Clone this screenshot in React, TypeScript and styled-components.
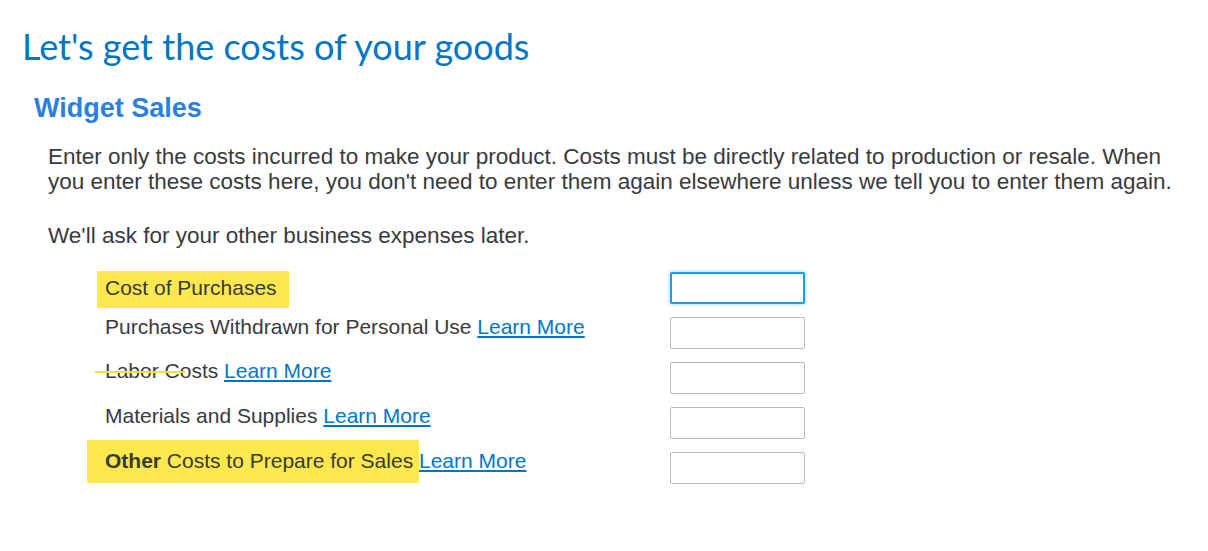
import React from "react";
import styled, { createGlobalStyle, css } from "styled-components";

const GlobalStyle = createGlobalStyle`
  html, body { margin: 0; padding: 0; background: #ffffff; }
  body { font-family: "Liberation Sans", Arial, sans-serif; color: #393a3d; }
`;

const Page = styled.main`
  padding: 24px 22px 40px 22px;
`;

const Title = styled.h1`
  margin: 0;
  font-family: Lato, "Open Sans", sans-serif;
  font-weight: 400;
  font-size: 36px;
  line-height: 44px;
  color: #0077c5;
`;

const Section = styled.section`
  padding-left: 12px;
  margin-top: 25px;
`;

const SubTitle = styled.h2`
  margin: 0;
  font-family: "Liberation Sans", Arial, sans-serif;
  font-weight: 700;
  font-size: 27px;
  line-height: 30px;
  color: #2b7fdf;
`;

const Body = styled.div`
  padding-left: 14px;
  margin-top: 21px;
`;

const Para = styled.p`
  margin: 0 0 29px 0;
  font-size: 22.5px;
  line-height: 25px;
  color: #393a3d;
  white-space: nowrap;
  &:last-child { margin-bottom: 0; }
`;

const Rows = styled.div`
  margin-top: 24px;
  padding-left: 63px;
  display: flex;
  flex-direction: column;
  gap: 13px;
`;

const Row = styled.div`
  display: grid;
  grid-template-columns: 573px 135px;
  align-items: start;
`;

const Label = styled.div<{ $top: number }>`
  margin-top: ${(p) => p.$top}px;
  padding-left: 8px;
  font-size: 21px;
  line-height: 24px;
  color: #393a3d;
  white-space: nowrap;
`;

const Mark = styled.span<{ $pad: [number, number, number, number] }>`
  display: inline-block;
  background: #fde84e;
  ${(p) => css`
    padding: ${p.$pad[0]}px ${p.$pad[1]}px ${p.$pad[2]}px ${p.$pad[3]}px;
    margin: -${p.$pad[0]}px -${p.$pad[1]}px -${p.$pad[2]}px -${p.$pad[3]}px;
  `}
`;

const Struck = styled.span`
  position: relative;
  &::before {
    content: "";
    position: absolute;
    left: -10px;
    width: 90px;
    top: 12px;
    height: 2px;
    background: #f3df3a;
  }
`;

const Bold = styled.strong`
  font-weight: 700;
`;

const Link = styled.a`
  color: #0077c5;
  text-decoration: underline;
  text-underline-offset: 2px;
  cursor: pointer;
`;

const Field = styled.input<{ $focused?: boolean }>`
  box-sizing: border-box;
  width: 135px;
  height: 32px;
  margin: 0;
  padding: 4px 8px;
  border: 1px solid #b9b9b9;
  border-radius: 2px;
  font-family: "Liberation Sans", Arial, sans-serif;
  font-size: 16px;
  background: #fff;
  outline: none;
  ${(p) =>
    p.$focused &&
    css`
      border: 2px solid #1a9ff0;
      box-shadow: 0 0 3px 1px rgba(40, 160, 240, 0.35);
    `}
`;

export default function App() {
  return (
    <>
      <GlobalStyle />
      <Page>
        <Title>Let's get the costs of your goods</Title>
        <Section>
          <SubTitle>Widget Sales</SubTitle>
          <Body>
            <Para>
              Enter only the costs incurred to make your product. Costs must be directly related to production or resale. When
              <br />
              you enter these costs here, you don't need to enter them again elsewhere unless we tell you to enter them again.
            </Para>
            <Para>We'll ask for your other business expenses later.</Para>
          </Body>
          <Rows>
            <Row>
              <Label $top={4}>
                <Mark $pad={[5, 12, 8, 8]}>Cost of Purchases</Mark>
              </Label>
              <Field $focused aria-label="Cost of Purchases" />
            </Row>
            <Row>
              <Label $top={-2}>
                Purchases Withdrawn for Personal Use <Link>Learn More</Link>
              </Label>
              <Field aria-label="Purchases Withdrawn for Personal Use" />
            </Row>
            <Row>
              <Label $top={-3}>
                <Struck>Labor Costs</Struck> <Link>Learn More</Link>
              </Label>
              <Field aria-label="Labor Costs" />
            </Row>
            <Row>
              <Label $top={-3}>
                Materials and Supplies <Link>Learn More</Link>
              </Label>
              <Field aria-label="Materials and Supplies" />
            </Row>
            <Row>
              <Label $top={-3}>
                <Mark $pad={[9, 0, 10, 18]}>
                  <Bold>Other</Bold> Costs to Prepare for Sales{"\u00a0"}
                </Mark>
                <Link>Learn More</Link>
              </Label>
              <Field aria-label="Other Costs to Prepare for Sales" />
            </Row>
          </Rows>
        </Section>
      </Page>
    </>
  );
}
